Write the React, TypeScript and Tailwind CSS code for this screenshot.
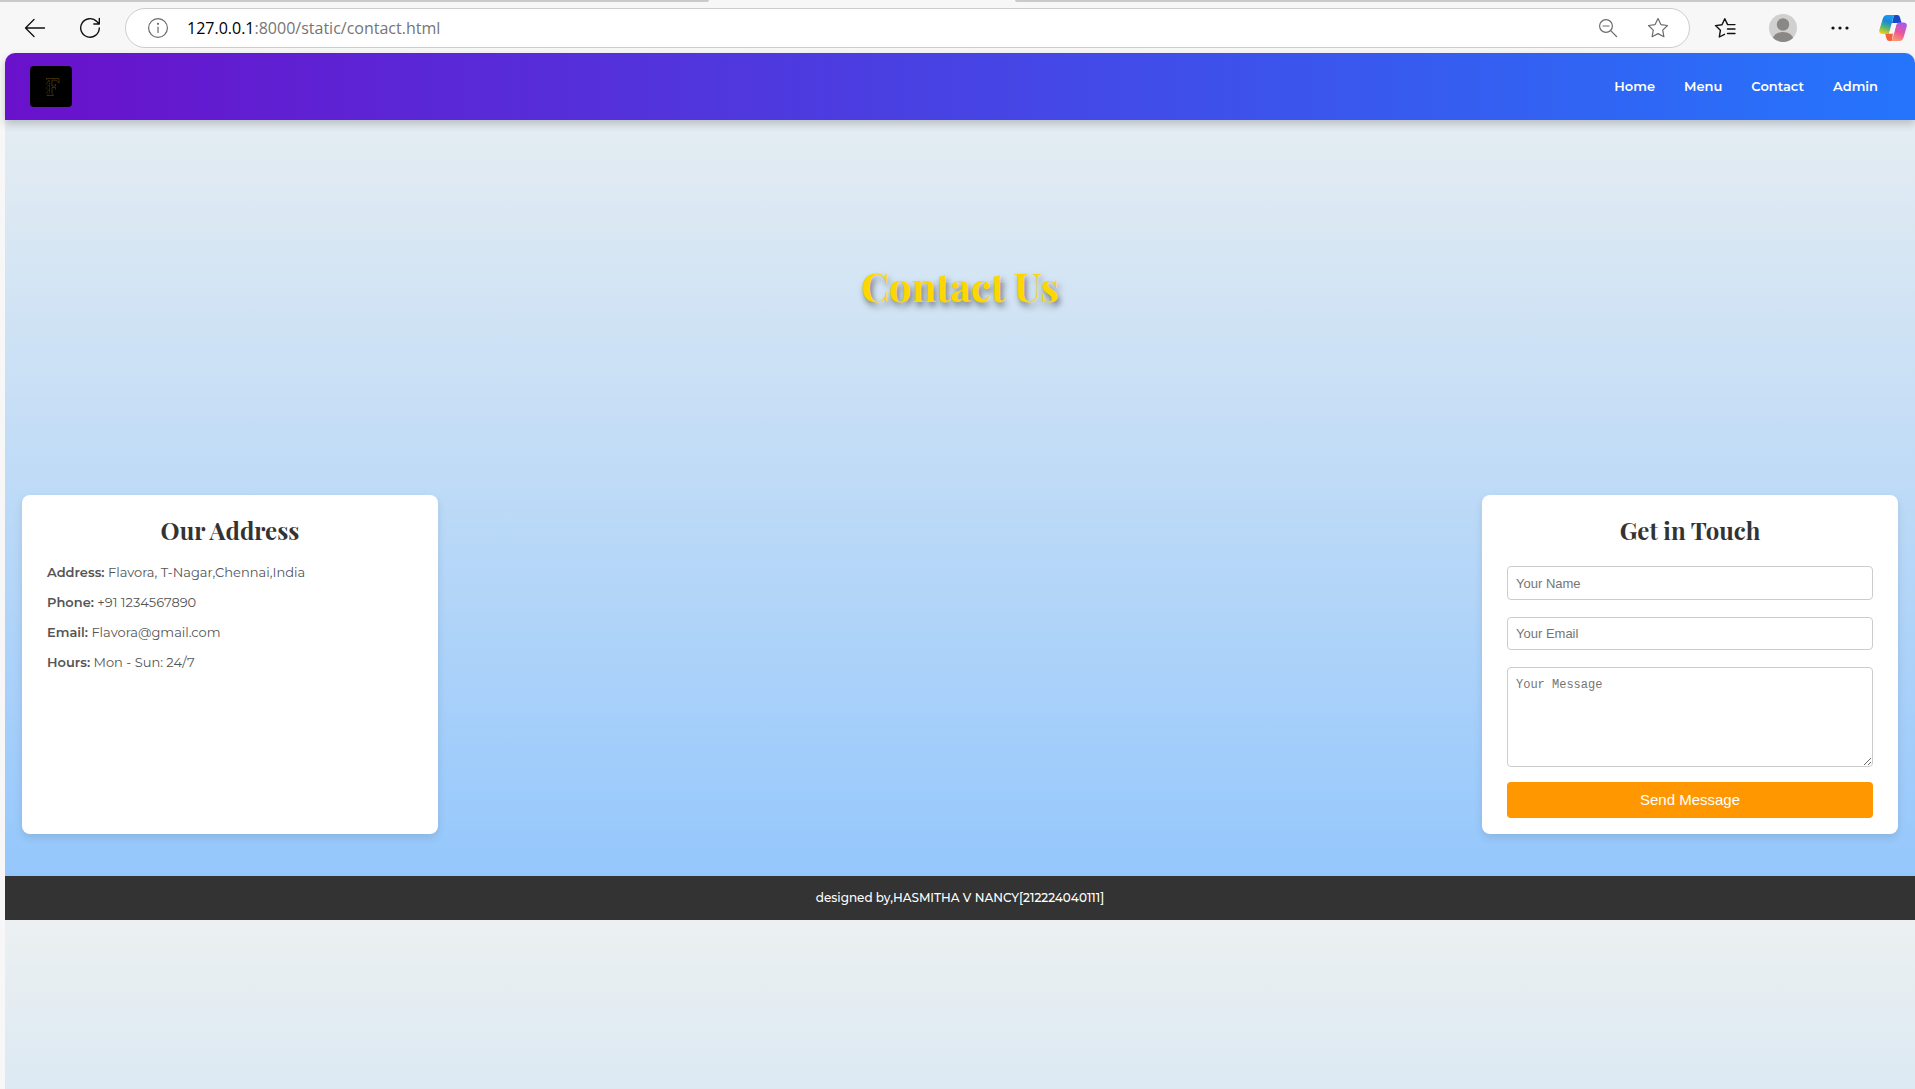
import React from "react";

const strokeProps = {
  fill: "none",
  strokeLinecap: "round" as const,
  strokeLinejoin: "round" as const,
};

function BackIcon() {
  return (
    <svg width="22" height="20" viewBox="0 0 22 20" stroke="#111" strokeWidth="1.3" {...strokeProps}>
      <path d="M20.500 10H1.500M10 1.500 1.500 10l8.500 8.500" />
    </svg>
  );
}

function ReloadIcon() {
  return (
    <svg width="22" height="22" viewBox="0 0 22 22" stroke="#111" strokeWidth="1.4" {...strokeProps}>
      <path d="M20.300 11A9.300 9.300 0 1 1 17.800 4.600L20.200 6.900M20.300 1.500v5.500h-5.500" />
    </svg>
  );
}

function InfoIcon() {
  return (
    <svg width="22" height="22" viewBox="0 0 22 22" stroke="#6b6b6b" strokeWidth="1.2" {...strokeProps}>
      <circle cx="11" cy="11" r="9.400" />
      <path d="M11 10v5.500" />
      <circle cx="11" cy="6.800" r="0.500" fill="#6b6b6b" />
    </svg>
  );
}

function ZoomOutIcon() {
  return (
    <svg width="20" height="20" viewBox="0 0 20 20" stroke="#6b6b6b" strokeWidth="1.200" {...strokeProps}>
      <circle cx="8" cy="8" r="6.400" />
      <path d="M5 8h6M12.700 12.700l5.800 5.800" />
    </svg>
  );
}

function StarIcon() {
  return (
    <svg width="22" height="22" viewBox="0 0 22 22" stroke="#6b6b6b" strokeWidth="1.200" {...strokeProps}>
      <path d="M11 1.500l2.900 6.100 6.600.9-4.800 4.600 1.200 6.700L11 16.600l-5.900 3.200 1.200-6.700L1.500 8.500l6.600-.9z" />
    </svg>
  );
}

function FavoritesIcon() {
  return (
    <svg width="22" height="22" viewBox="0 0 22 22" stroke="#111" strokeWidth="1.400" {...strokeProps}>
      <path d="M10.500 17.300 5.300 20l1.100-6.700L1.500 8.600l6.500-.9L10.800 1.700l2.800 5.900M13.500 7.600h7.500M13.500 12h7.500M13.500 16.500h7.500" />
    </svg>
  );
}

function AvatarIcon() {
  return (
    <svg width="28" height="28" viewBox="0 0 28 28">
      <defs>
        <clipPath id="avatar-clip">
          <circle cx="14" cy="14" r="14" />
        </clipPath>
      </defs>
      <g clipPath="url(#avatar-clip)">
        <rect width="28" height="28" fill="#d2d0ce" />
        <circle cx="14" cy="10.500" r="6.200" fill="#8a8886" />
        <ellipse cx="14" cy="26" rx="10.500" ry="8" fill="#8a8886" />
      </g>
    </svg>
  );
}

function DotsIcon() {
  return (
    <svg width="18" height="4" viewBox="0 0 18 4" fill="#111">
      <circle cx="2" cy="2" r="1.600" />
      <circle cx="9" cy="2" r="1.600" />
      <circle cx="16" cy="2" r="1.600" />
    </svg>
  );
}

function CopilotIcon() {
  return (
    <svg width="28" height="28" viewBox="0 0 28 28">
      <defs>
        <linearGradient id="copilot-left" x1="0.600" y1="0" x2="0.300" y2="1">
          <stop offset="0" stopColor="#16a0f0" />
          <stop offset="0.350" stopColor="#1b86dc" />
          <stop offset="0.650" stopColor="#4fb47a" />
          <stop offset="1" stopColor="#f0d010" />
        </linearGradient>
        <linearGradient id="copilot-right" x1="0.700" y1="0" x2="0.300" y2="1">
          <stop offset="0" stopColor="#a558ee" />
          <stop offset="0.500" stopColor="#e8559b" />
          <stop offset="1" stopColor="#ff9a70" />
        </linearGradient>
      </defs>
      <path d="M19 9h-6l2-8h3c1.800 0 2.500.8 3 2.500L22.500 9z" fill="#1749c8" />
      <path d="M6 19h8l-1 8h-2.500C8.500 27 7.800 25.800 7.300 24z" fill="#f4603c" />
      <path d="M19.500 8.500h5c2.500 0 3.900 1.700 3.200 4l-3 10.500c-.8 2.700-2 4-4.500 4H11c1.700 0 2.300-1.200 2.800-3l3.200-12.500c.5-2 1-3 2.500-3z" fill="url(#copilot-right)" />
      <path d="M8.300 1H17c-1.700 0-2.400 1.200-2.900 3l-3.400 13c-.5 2-1 3-2.700 3H3.800C1 20-.3 18.300.4 15.800L3.700 5C4.500 2.300 5.700 1 8.300 1z" fill="url(#copilot-left)" />
      <path d="M15 9h4c-1.200.4-1.700 1.500-2 2.800L15.200 18c-.3 1.200-.8 1.700-2 1.700H9.500c.8-.6 1.200-1.600 1.500-2.800l1.500-5.700C12.900 9.700 13.500 9 15 9z" fill="#f7f7f7" />
    </svg>
  );
}

function FlavoraLogo() {
  return (
    <svg width="42" height="41" viewBox="0 0 42 41" role="img" aria-label="Flavora">
      <rect width="42" height="41" rx="4" fill="#000" />
      <g fill="none" stroke="#4a380c" strokeWidth="0.800">
        <path d="M16 12.500h13v4.500M28.500 17c-.5-2-1.800-2.800-3.500-2.800h-3v5.800h3.500v-2M25.500 23.500v-2h-3.500V27l1.500 2.500H16.500" />
        <path d="M16 13l3 2-3 2.500 2.500 2-2.500 2.500 2.500 2-2 3 2 2M19.500 14.500v13" strokeDasharray="1.600 0.800" />
      </g>
    </svg>
  );
}

function BrowserBar() {
  return (
    <div className="bg-[#f7f7f7]">
      <div className="flex h-[2px]">
        <div className="w-[37%] rounded-br-sm bg-[#cacaca]" />
        <div className="w-[16%]" />
        <div className="flex-1 rounded-bl-sm bg-[#cacaca]" />
      </div>
      <div className="flex h-[51px] items-center pt-1 pr-2 pb-1 pl-6">
        <button aria-label="Back">
          <BackIcon />
        </button>
        <button aria-label="Reload" className="ml-[33px]">
          <ReloadIcon />
        </button>
        <div className="ml-6 flex h-10 flex-1 items-center rounded-full border border-[#cdcdcd] bg-white pr-5 pl-[21px]">
          <button aria-label="Site information">
            <InfoIcon />
          </button>
          <div className="ml-[18px] flex-1 font-['Open_Sans',sans-serif] text-[16px] leading-6 text-[#757575]">
            <span className="text-black">127.0.0.1</span>:8000/static/contact.html
          </div>
          <button aria-label="Zoom out">
            <ZoomOutIcon />
          </button>
          <button aria-label="Add to favorites" className="ml-[29px]">
            <StarIcon />
          </button>
        </div>
        <button aria-label="Favorites" className="ml-6">
          <FavoritesIcon />
        </button>
        <button aria-label="Profile" className="ml-[33px]">
          <AvatarIcon />
        </button>
        <button aria-label="More" className="ml-[34px]">
          <DotsIcon />
        </button>
        <button aria-label="Copilot" className="ml-[30px]">
          <CopilotIcon />
        </button>
      </div>
    </div>
  );
}

const links = ["Home", "Menu", "Contact", "Admin"];

function SiteHeader() {
  return (
    <header className="relative flex items-start justify-between rounded-t-[10px] bg-linear-to-r/srgb from-[#6a11cb] to-[#2575fc] pt-[13px] pr-[37px] pb-[13px] pl-[25px] shadow-[0_4px_8px_rgba(0,0,0,0.2)]">
      <FlavoraLogo />
      <nav className="flex gap-[29px] pt-[10px] font-['Montserrat','Inter',sans-serif] text-[13px] leading-5 font-semibold text-white">
        {links.map((label) => (
          <a key={label} href="#">
            {label}
          </a>
        ))}
      </nav>
    </header>
  );
}

const details = [
  ["Address:", "Flavora, T-Nagar,Chennai,India"],
  ["Phone:", "+91 1234567890"],
  ["Email:", "Flavora@gmail.com"],
  ["Hours:", "Mon - Sun: 24/7"],
];

const cardClass = "w-[416px] rounded-lg bg-white px-[25px] py-4 shadow-[0_4px_8px_rgba(0,0,0,0.1)]";
const cardTitleClass =
  "text-center font-['Playfair_Display','Liberation_Serif',serif] text-[24px] leading-[38px] font-bold text-[#333]";
const fieldClass =
  "block w-full rounded-sm border border-[#ccc] bg-white px-2 placeholder:text-[#757575]";

function AddressCard() {
  return (
    <section className={cardClass}>
      <h2 className={cardTitleClass}>Our Address</h2>
      <div className="mt-[13px] flex flex-col gap-[9px] font-['Montserrat','Inter',sans-serif] text-[13px] leading-[21px] text-[#555]">
        {details.map(([name, value]) => (
          <p key={name}>
            <strong className="font-semibold">{name}</strong> {value}
          </p>
        ))}
      </div>
    </section>
  );
}

function ContactForm() {
  return (
    <section className={cardClass}>
      <h2 className={cardTitleClass}>Get in Touch</h2>
      <form className="mt-[17px] font-['Liberation_Sans',sans-serif]">
        <input
          type="text"
          aria-label="Your Name"
          placeholder="Your Name"
          className={`${fieldClass} h-[34px] text-[13px]`}
        />
        <input
          type="email"
          aria-label="Your Email"
          placeholder="Your Email"
          className={`${fieldClass} mt-[17px] h-[33px] text-[13px]`}
        />
        <textarea
          aria-label="Your Message"
          placeholder="Your Message"
          className={`${fieldClass} mt-[17px] h-[100px] py-2 font-['Liberation_Mono',monospace] text-[12px] leading-[18px]`}
        />
        <button
          type="button"
          className="mt-[15px] block h-9 w-full rounded-sm bg-[#ff9800] text-[15px] text-white"
        >
          Send Message
        </button>
      </form>
    </section>
  );
}

export default function App() {
  return (
    <div className="flex min-h-screen flex-col bg-[#f7f7f7]">
      <BrowserBar />
      <div className="ml-[5px] flex flex-1 flex-col">
        <div className="rounded-t-[10px] bg-linear-to-b/srgb from-[#ecf0f1] to-[#90c5fd]">
          <SiteHeader />
          <div className="flex h-[332px] items-center justify-center">
            <h1 className="font-['Playfair_Display','Liberation_Serif',serif] text-[40px] leading-[60px] font-bold text-[#ffd700] [text-shadow:2px_4px_6px_rgba(0,0,0,0.5)]">
              Contact Us
            </h1>
          </div>
          <main className="flex justify-between px-[17px] pt-[43px] pb-[42px]">
            <AddressCard />
            <ContactForm />
          </main>
          <footer className="bg-[#333] py-3 text-center font-['Montserrat','Inter',sans-serif] text-[12px] leading-5 font-medium text-white">
            designed by,HASMITHA V NANCY[212224040111]
          </footer>
        </div>
        <div className="flex-1 bg-linear-to-b/srgb from-[#ecf0f1] to-[#dce9f3]" />
      </div>
    </div>
  );
}
